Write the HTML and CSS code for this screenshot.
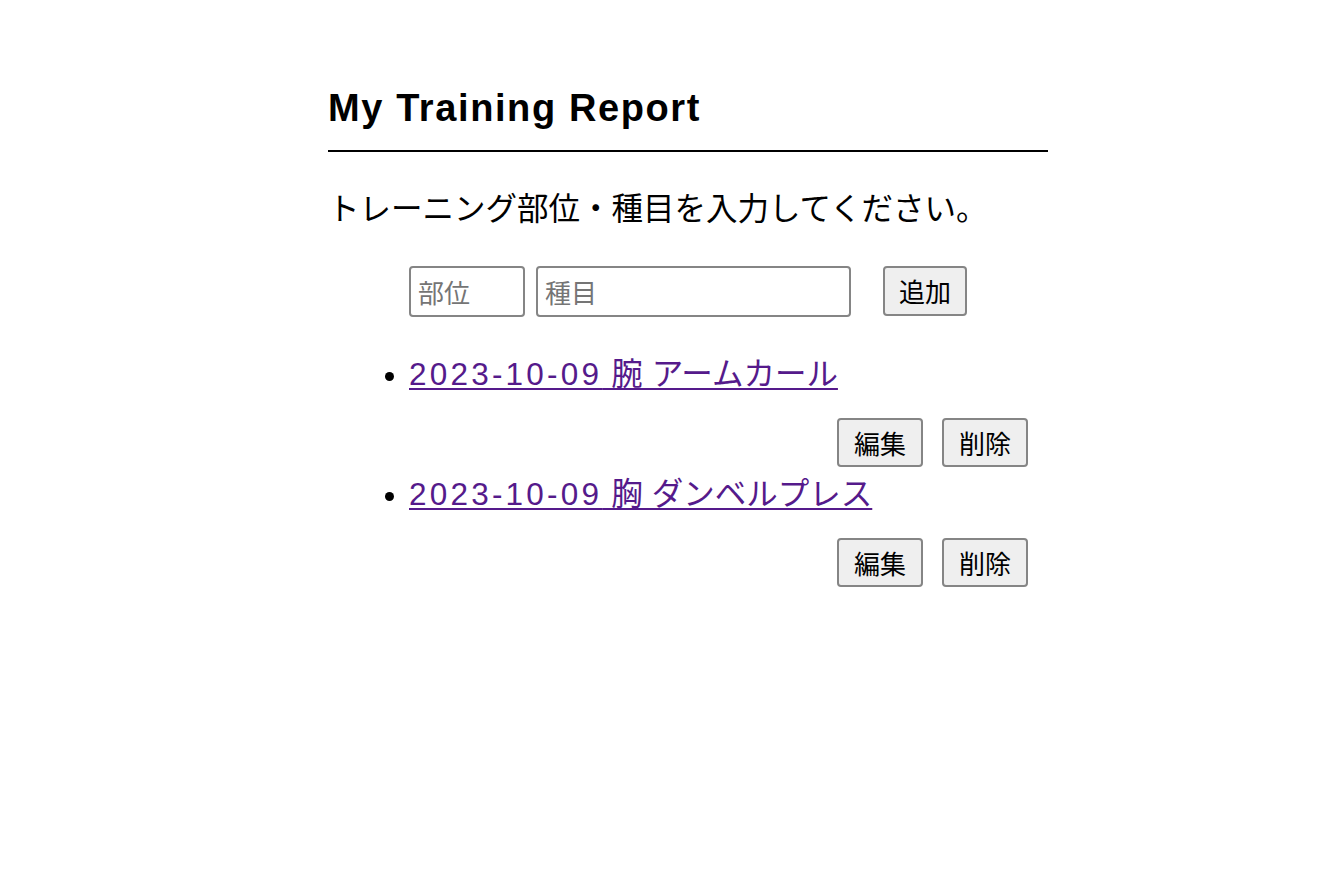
FILE: index.html
```html
<!DOCTYPE html>
<html lang="ja">
<head>
<meta charset="utf-8">
<title>My Training Report</title>
<link rel="stylesheet" href="styles.css">
</head>
<body>
<div class="page">
  <h1 class="title">My Training Report</h1>
  <p class="lead">トレーニング部位・種目を入力してください。</p>
  <form class="entry">
    <input class="field field-part" type="text" placeholder="部位">
    <input class="field field-item" type="text" placeholder="種目">
    <button class="btn btn-add" type="button">追加</button>
  </form>
  <ul class="records">
    <li class="record">
      <a class="record-link" href="#"><span class="date">2023-10-09</span> 腕 アームカール</a>
      <div class="actions">
        <button class="btn" type="button">編集</button>
        <button class="btn" type="button">削除</button>
      </div>
    </li>
    <li class="record">
      <a class="record-link" href="#"><span class="date">2023-10-09</span> 胸 ダンベルプレス</a>
      <div class="actions">
        <button class="btn" type="button">編集</button>
        <button class="btn" type="button">削除</button>
      </div>
    </li>
  </ul>
</div>
</body>
</html>
```

FILE: styles.css
```css
html, body {
  margin: 0;
  padding: 0;
  background: #ffffff;
  color: #000000;
}

body {
  font-family: "Noto Sans CJK JP", "Liberation Sans", sans-serif;
  font-size: 31.5px;
}

.page {
  width: 720px;
  margin-left: 328px;
  padding-top: 86px;
}

.title {
  margin: 0;
  font-family: "Liberation Sans", "Noto Sans CJK JP", sans-serif;
  font-size: 38px;
  font-weight: 700;
  letter-spacing: 1.6px;
  line-height: 44px;
  padding-bottom: 20px;
  border-bottom: 2px solid #000000;
}

.lead {
  margin: 32px 0 0 0;
  line-height: 45px;
}

.entry {
  display: flex;
  justify-content: center;
  align-items: center;
  margin-top: 37px;
}

.field {
  box-sizing: border-box;
  height: 51px;
  padding: 0 7px;
  border: 2px solid #858585;
  border-radius: 4px;
  font-family: "Noto Sans CJK JP", sans-serif;
  font-size: 26px;
  color: #000000;
  background: #ffffff;
}

.field::placeholder {
  color: #757575;
}

.field-part {
  width: 116px;
}

.field-item {
  width: 315px;
  margin-left: 11px;
}

.btn {
  box-sizing: border-box;
  height: 49px;
  padding: 0 15px;
  border: 2px solid #858585;
  border-radius: 4px;
  background: #efefef;
  font-family: "Noto Sans CJK JP", sans-serif;
  font-size: 26px;
  color: #000000;
  line-height: 1;
}

.btn-add {
  margin-left: 32px;
  height: 50px;
  padding: 0 14px;
  margin-top: -2px;
}

.records {
  margin: 32px 0 0 0;
  padding-left: 81px;
  list-style: disc;
}

.record {
  line-height: 45px;
}

.record::marker {
  font-size: 22px;
}

.record-link {
  color: #551a8b;
  text-decoration: underline;
  text-decoration-thickness: 2px;
  text-underline-offset: 3px;
  word-spacing: 2px;
}

.date {
  font-family: "Liberation Sans", sans-serif;
  letter-spacing: 3.2px;
}

.actions {
  display: flex;
  justify-content: flex-end;
  gap: 19px;
  margin-top: 21px;
  margin-bottom: 2px;
  padding-right: 20px;
}
```
